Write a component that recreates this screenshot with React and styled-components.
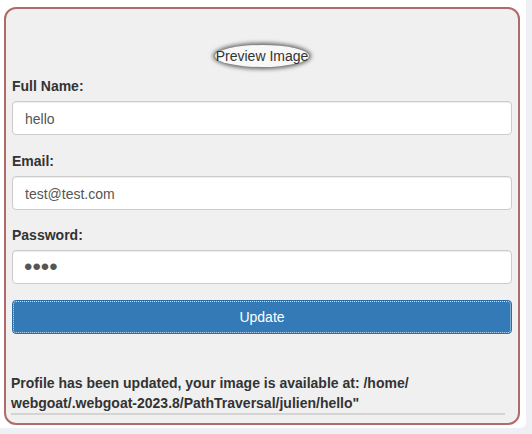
import styled, { createGlobalStyle } from 'styled-components';

/*
 * Global
 */
const GlobalStyle = createGlobalStyle`
  body {
    margin: 0;
    background-color: #eef0f6;
    font-family: "Liberation Sans", Arial, Helvetica, sans-serif;
    font-size: 14px;
    line-height: 20px;
    color: #333;
  }
  * {
    box-sizing: border-box;
  }
`;

/*
 * Styled Component
 */
const Page = styled.div`
  width: 526px;
  height: 428px;
  padding: 7px 6px 0 4px;
  background-color: #fff;
  border-bottom-right-radius: 6px;
`;

const Panel = styled.div`
  display: flex;
  flex-direction: column;
  width: 516px;
  height: 418px;
  padding: 36px 6px 0 6px;
  background-color: #f0f0f0;
  border: 2px solid #b16a6a;
  border-radius: 12px;
`;

const PreviewRow = styled.div`
  display: flex;
  justify-content: center;
  margin-bottom: 9px;
`;

const Preview = styled.span`
  display: inline-block;
  height: 22px;
  line-height: 22px;
  padding: 0 1px;
  font-size: 14px;
  color: #333;
  background-color: #f8f8f8;
  border-radius: 50%;
  box-shadow: 0 0 4px 2px rgba(0, 0, 0, 0.6);
`;

const Group = styled.div`
  display: flex;
  flex-direction: column;
  margin-bottom: 15.5px;
`;

const Label = styled.label`
  font-weight: 700;
  line-height: 20px;
  margin-bottom: 5px;
`;

const Input = styled.input`
  width: 100%;
  height: 34px;
  padding: ${(props) => (props.type === 'password' ? '4px 11px' : '7px 12px 5px')};
  font-family: "Liberation Sans", Arial, Helvetica, sans-serif;
  font-size: ${(props) => (props.type === 'password' ? '24px' : '14px')};
  color: #555;
  background-color: #fff;
  border: 1px solid #ccc;
  border-radius: 4px;
  box-shadow: inset 0 1px 1px rgba(0, 0, 0, 0.075);
  outline: none;
`;

const Button = styled.button`
  width: 100%;
  height: 34px;
  padding: 6px 12px;
  font-family: "Liberation Sans", Arial, Helvetica, sans-serif;
  font-size: 14px;
  color: #fff;
  background-color: #337ab7;
  border: 1px solid #2e6da4;
  border-radius: 4px;
  outline: 1px dotted rgba(220, 235, 250, 0.9);
  outline-offset: -2px;
  cursor: pointer;
`;

const Message = styled.div`
  margin: 39.5px 7px 0 -1px;
  font-weight: 700;
  line-height: 20px;
  border-bottom: 2px solid #d4d4d4;
`;

const fields = [
  { id: 'name', label: 'Full Name:', type: 'text', value: 'hello' },
  { id: 'email', label: 'Email:', type: 'text', value: 'test@test.com' },
  { id: 'password', label: 'Password:', type: 'password', value: 'test' },
];

const App = () => {
  return (
    <>
      <GlobalStyle />
      <Page>
        <Panel>
          <PreviewRow>
            <Preview>Preview Image</Preview>
          </PreviewRow>
          {fields.map((field) => (
            <Group key={field.id}>
              <Label htmlFor={field.id}>{field.label}</Label>
              <Input id={field.id} type={field.type} defaultValue={field.value} readOnly />
            </Group>
          ))}
          <Button type='button'>Update</Button>
          <Message>
            Profile has been updated, your image is available at: /home/
            <br />
            webgoat/.webgoat-2023.8/PathTraversal/julien/hello"
          </Message>
        </Panel>
      </Page>
    </>
  );
};

export default App;
